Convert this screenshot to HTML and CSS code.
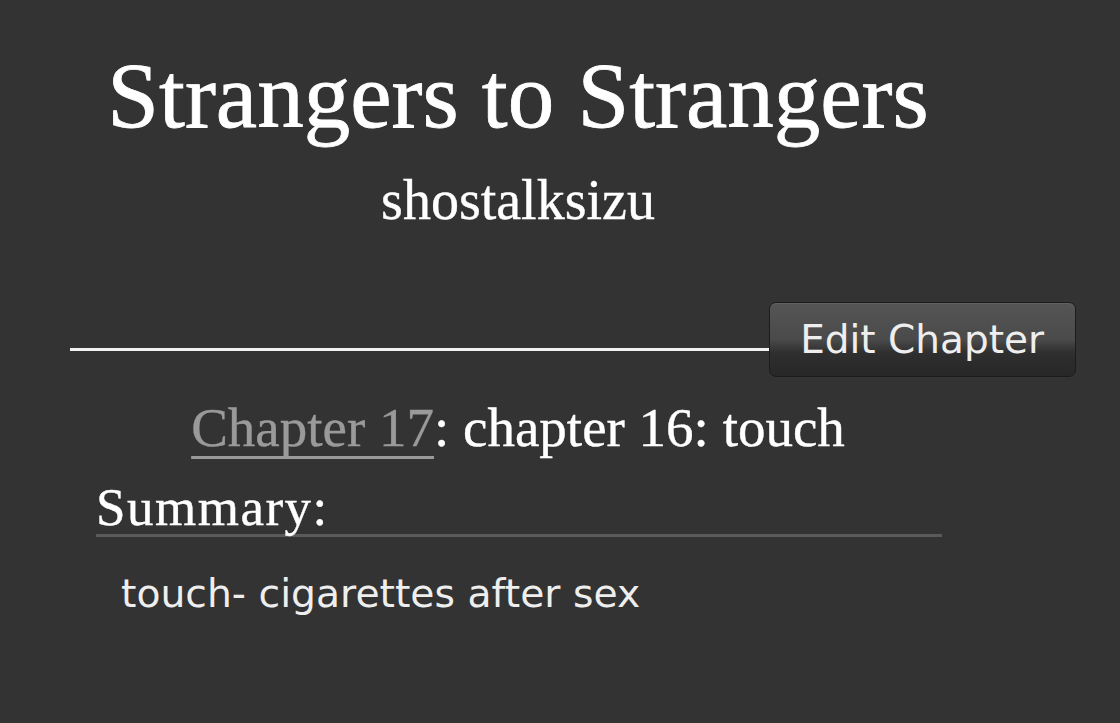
FILE: index.html
```html
<!DOCTYPE html>
<html lang="en">
<head>
<meta charset="utf-8">
<title>Strangers to Strangers - Chapter 17</title>
<link rel="stylesheet" href="styles.css">
</head>
<body>
<div class="page">
  <div class="preface">
    <h2 class="title">Strangers to Strangers</h2>
    <h3 class="byline">shostalksizu</h3>
  </div>

  <div class="actions">
    <div class="rule"></div>
    <a class="button" href="#">Edit Chapter</a>
  </div>

  <div class="chapter-preface">
    <h3 class="chapter-title"><a href="#">Chapter 17</a>: chapter 16: touch</h3>
    <div class="summary">
      <h3 class="summary-heading">Summary:</h3>
      <blockquote class="userstuff"><p>touch- cigarettes after sex</p></blockquote>
    </div>
  </div>
</div>
</body>
</html>
```
FILE: styles.css
```css
html, body {
  margin: 0;
  padding: 0;
  background: #333333;
  color: #ffffff;
}

body {
  font-family: "Liberation Serif", "Times New Roman", serif;
}

.page {
  padding: 46px 44px 0 70px;
}

/* work title and author */
.preface {
  margin-right: 110px;
  text-align: center;
}

.title {
  margin: 0;
  font-size: 93px;
  line-height: 100px;
  font-weight: normal;
  -webkit-text-stroke: 0.8px #ffffff;
}

.byline {
  margin: 24px 0 0;
  font-size: 56px;
  line-height: 60px;
  font-weight: normal;
  -webkit-text-stroke: 0.4px #ffffff;
}

/* rule with the edit action sitting at its end */
.actions {
  display: flex;
  align-items: flex-start;
  margin-top: 72px;
}

.rule {
  flex: 1;
  height: 3px;
  margin-top: 46px;
  background: #f2f2f2;
}

.button {
  display: block;
  height: 73px;
  padding: 0 31px 0 30px;
  border: 1px solid #1c1c1c;
  border-radius: 7px;
  background: linear-gradient(to bottom, #555555 0%, #4a4a4a 50%, #2f2f2f 68%, #272727 100%);
  box-shadow: inset 0 1px 0 rgba(255, 255, 255, 0.08);
  color: #eeeeee;
  font-family: "DejaVu Sans", Verdana, sans-serif;
  font-size: 39px;
  line-height: 73px;
  text-decoration: none;
  white-space: nowrap;
}

/* chapter heading block */
.chapter-preface {
  margin: 19px 110px 0 0;
}

.chapter-title {
  margin: 0;
  text-align: center;
  font-size: 55px;
  line-height: 64px;
  font-weight: normal;
  -webkit-text-stroke: 0.4px currentColor;
}

.chapter-title a {
  color: #9a9a9a;
  text-decoration: underline;
  text-decoration-thickness: 3px;
  text-underline-offset: 10px;
  text-decoration-skip-ink: none;
}

.summary {
  margin: 20px 24px 0 26px;
}

.summary-heading {
  margin: 0;
  font-size: 53px;
  line-height: 54px;
  letter-spacing: 1.5px;
  font-weight: normal;
  -webkit-text-stroke: 0.4px #ffffff;
  border-bottom: 3px solid #5a5a5a;
}

.userstuff {
  margin: 34px 0 0 25px;
  font-family: "DejaVu Sans", Verdana, sans-serif;
  font-size: 39.3px;
  line-height: 46px;
  color: #eeeeee;
}

.userstuff p {
  margin: 0;
}
```
